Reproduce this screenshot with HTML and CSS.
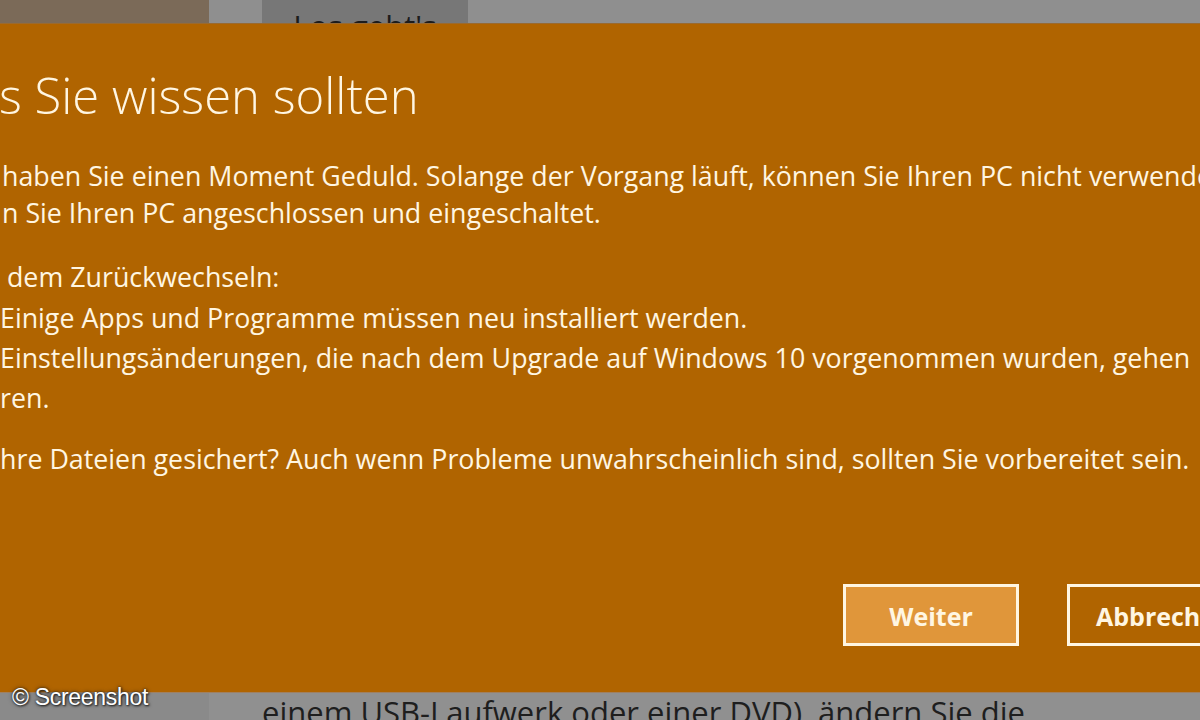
FILE: index.html
```html
<!DOCTYPE html>
<html lang="de">
<head>
<meta charset="utf-8">
<title>Was Sie wissen sollten</title>
<link rel="stylesheet" href="styles.css">
</head>
<body>
<div class="screen">
  <div class="strip strip-top">
    <div class="col col-side"></div>
    <div class="col col-gap"></div>
    <div class="col col-tile"><span class="tile-text">Los geht's</span></div>
    <div class="col col-rest"></div>
  </div>

  <div class="dialog">
    <h1 class="title">s Sie wissen sollten</h1>
    <p class="para p1">haben Sie einen Moment Geduld. Solange der Vorgang läuft, können Sie Ihren PC nicht verwenden.<br>n Sie Ihren PC angeschlossen und eingeschaltet.</p>
    <p class="para p2">&nbsp;dem Zurückwechseln:</p>
    <ul class="list">
      <li>Einige Apps und Programme müssen neu installiert werden.</li>
      <li>Einstellungsänderungen, die nach dem Upgrade auf Windows 10 vorgenommen wurden, gehen<br>ren.</li>
    </ul>
    <p class="para p3">hre Dateien gesichert? Auch wenn Probleme unwahrscheinlich sind, sollten Sie vorbereitet sein.</p>
    <div class="actions">
      <button class="btn btn-primary">Weiter</button>
      <button class="btn btn-secondary">Abbrechen</button>
    </div>
  </div>

  <div class="strip strip-bottom">
    <div class="col col-side-b"></div>
    <div class="col col-gap-b"></div>
    <div class="col col-text-b"><span class="bottom-text">einem USB-Laufwerk oder einer DVD), ändern Sie die</span></div>
  </div>

  <div class="watermark">© Screenshot</div>
</div>
</body>
</html>
```

FILE: styles.css
```css
html, body {
  margin: 0;
  padding: 0;
  width: 1200px;
  height: 720px;
  overflow: hidden;
  background: #8e8e8e;
}

.screen {
  position: relative;
  width: 1200px;
  height: 720px;
  display: flex;
  flex-direction: column;
  overflow: hidden;
  font-family: "Open Sans", "Noto Sans", "DejaVu Sans", sans-serif;
}

.strip {
  display: grid;
  flex: none;
  overflow: hidden;
}

.strip-top {
  height: 23px;
  grid-template-columns: 209px 53px 206px 1fr;
}

.col-side { background: #7b6a58; }
.col-gap { background: #8f8f8f; }
.col-tile {
  background: #777777;
  overflow: hidden;
  display: flex;
  justify-content: center;
}
.col-rest { background: #8f8f8f; }

.tile-text {
  font-size: 31px;
  line-height: 31px;
  color: #1c1c1c;
  padding-top: 11px;
  white-space: nowrap;
}

.dialog {
  flex: none;
  height: 669px;
  background: #b06400;
  border-top: 1px solid #9a6a30;
  box-sizing: border-box;
  color: #fff6e2;
  display: flex;
  flex-direction: column;
  overflow: hidden;
  white-space: nowrap;
}

.title {
  margin: 43px 0 0 -1px;
  font-size: 49px;
  line-height: 56px;
  font-weight: 300;
  letter-spacing: 0;
}

.para {
  margin: 0;
  font-size: 26.8px;
  line-height: 37px;
}

.p1 { margin-top: 34px; padding-left: 2px; }
.p2 { margin-top: 27px; padding-left: 0; }
.p3 { margin-top: 22px; }

.list {
  margin: 3px 0 0 0;
  padding: 0;
  list-style: none;
  font-size: 26.8px;
  line-height: 40px;
}

.actions {
  margin-top: auto;
  margin-bottom: 46px;
  display: flex;
  gap: 48px;
  padding-left: 843px;
}

.btn {
  flex: none;
  width: 176px;
  height: 62px;
  box-sizing: border-box;
  border: 3px solid #fff6e2;
  color: #fff6e2;
  font-family: "Open Sans", "Noto Sans", sans-serif;
  font-weight: 700;
  font-size: 25px;
  padding: 2px 0 0 0;
  cursor: pointer;
}

.btn-primary { background: #e0963a; }
.btn-secondary { background: #b06400; text-align: left; padding-left: 26px; }

.strip-bottom {
  flex: 1;
  grid-template-columns: 209px 53px 1fr;
  border-top: 1px solid #a08060;
}

.col-side-b { background: #8a8a8a; }
.col-gap-b { background: #909090; }
.col-text-b {
  background: #909090;
  overflow: hidden;
}

.bottom-text {
  display: block;
  font-size: 31px;
  line-height: 31px;
  color: #1e1e1e;
  padding-top: 4px;
  white-space: nowrap;
}

.watermark {
  position: absolute;
  left: 12px;
  top: 683px;
  font-family: "Liberation Sans", Arial, sans-serif;
  font-size: 23px;
  line-height: 28px;
  color: #ffffff;
  text-shadow: 0 0 2px #333, 1px 1px 2px #222, 0 0 4px rgba(0,0,0,0.6);
  letter-spacing: -0.3px;
}
```
